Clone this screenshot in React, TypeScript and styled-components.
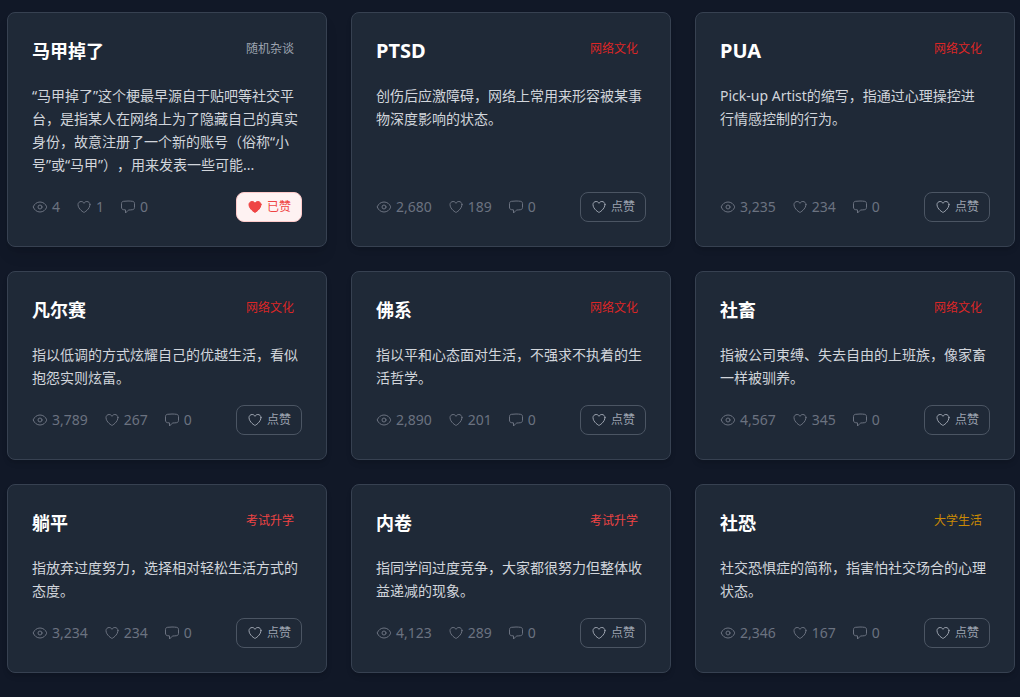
import React, { useState } from "react";
import styled, { createGlobalStyle } from "styled-components";

const GlobalStyle = createGlobalStyle`
  *, *::before, *::after { box-sizing: border-box; }
  body {
    margin: 0;
    background: #111827;
    color: #ffffff;
    font-family: "Noto Sans", "Noto Sans CJK SC", sans-serif;
    text-spacing-trim: space-all;
  }
`;

const Page = styled.main`
  padding: 12px 5px 23px 7px;
`;

const Grid = styled.div`
  display: grid;
  grid-template-columns: repeat(3, minmax(0, 1fr));
  gap: 24px;
`;

const Card = styled.article<{ $raised?: boolean }>`
  display: flex;
  flex-direction: column;
  padding: 24px;
  border: 1px solid #374151;
  border-radius: 8px;
  background: #1f2937;
  box-shadow: ${(p) =>
    p.$raised
      ? "0 10px 15px -3px rgba(0, 0, 0, 0.1), 0 4px 6px -4px rgba(0, 0, 0, 0.1)"
      : "0 4px 6px -1px rgba(0, 0, 0, 0.1), 0 2px 4px -2px rgba(0, 0, 0, 0.1)"};
`;

const CardHeader = styled.header`
  display: flex;
  align-items: flex-start;
  justify-content: space-between;
  margin-bottom: 19px;
`;

const Title = styled.h3<{ $latin: boolean }>`
  margin: 0;
  font-size: ${(p) => (p.$latin ? "20px" : "18px")};
  line-height: 28px;
  font-weight: 700;
`;

const Tag = styled.span<{ $color: string }>`
  flex: none;
  padding: 4px 8px;
  font-size: 12px;
  line-height: 16px;
  color: ${(p) => p.$color};
`;

const Description = styled.p`
  flex: 1;
  margin: 0 0 16px;
  padding-right: 3px;
  font-size: 14px;
  line-height: 23px;
  color: #d1d5db;
`;

const CardFooter = styled.footer`
  display: flex;
  align-items: center;
  justify-content: space-between;
`;

const Stats = styled.div`
  display: flex;
  gap: 16px;
  color: #6b7280;
  font-size: 14px;
  line-height: 20px;
`;

const Stat = styled.span`
  display: flex;
  align-items: center;
  gap: 4px;
`;

const LikeButton = styled.button<{ $liked: boolean }>`
  display: flex;
  align-items: center;
  gap: 4px;
  height: 30px;
  padding: 0 10px;
  border: 1px solid ${(p) => (p.$liked ? "#fecaca" : "#4b5563")};
  border-radius: 8px;
  background: ${(p) => (p.$liked ? "#fef2f2" : "transparent")};
  color: ${(p) => (p.$liked ? "#ef4444" : "#9ca3af")};
  font-family: inherit;
  font-size: 12px;
  line-height: 16px;
  cursor: pointer;
`;

const Icon = styled.svg`
  display: block;
  width: 16px;
  height: 16px;
  flex: none;
  stroke: currentColor;
  stroke-width: 1.5;
  stroke-linecap: round;
  stroke-linejoin: round;
`;

const EyeIcon = () => (
  <Icon viewBox="0 0 24 24" fill="none" aria-hidden="true">
    <path d="M2.036 12.322a1.012 1.012 0 0 1 0-.639C3.423 7.51 7.36 4.5 12 4.5c4.638 0 8.573 3.007 9.963 7.178.07.207.07.431 0 .639C20.577 16.49 16.64 19.5 12 19.5c-4.638 0-8.573-3.007-9.963-7.178Z" />
    <path d="M15 12a3 3 0 1 1-6 0 3 3 0 0 1 6 0Z" />
  </Icon>
);

const HeartIcon = ({ filled = false }: { filled?: boolean }) => (
  <Icon viewBox="0 0 24 24" fill={filled ? "currentColor" : "none"} aria-hidden="true">
    <path d="M21 8.25c0-2.485-2.099-4.5-4.688-4.5-1.935 0-3.597 1.126-4.312 2.733-.715-1.607-2.377-2.733-4.313-2.733C5.1 3.75 3 5.765 3 8.25c0 7.22 9 12 9 12s9-4.78 9-12Z" />
  </Icon>
);

const CommentIcon = () => (
  <Icon viewBox="0 0 24 24" fill="none" aria-hidden="true">
    <path d="M2.25 12.76c0 1.6 1.123 2.994 2.707 3.227 1.087.16 2.185.283 3.293.369V21l4.076-4.076a1.526 1.526 0 0 1 1.037-.443 48.282 48.282 0 0 0 5.68-.494c1.584-.233 2.707-1.626 2.707-3.228V6.741c0-1.602-1.123-2.995-2.707-3.228A48.394 48.394 0 0 0 12 3c-2.392 0-4.744.175-7.043.513C3.373 3.746 2.25 5.14 2.25 6.741v6.018Z" />
  </Icon>
);

interface Meme {
  title: string;
  category: string;
  text: string;
  views: number;
  likes: number;
  comments: number;
  liked?: boolean;
}

const categoryColors: Record<string, string> = {
  随机杂谈: "#9ca3af",
  网络文化: "#dc2626",
  考试升学: "#ef4444",
  大学生活: "#ca8a04",
};

const memes: Meme[] = [
  { title: "马甲掉了", category: "随机杂谈", text: "“马甲掉了”这个梗最早源自于贴吧等社交平台，是指某人在网络上为了隐藏自己的真实身份，故意注册了一个新的账号（俗称“小号”或“马甲”），用来发表一些可能...", views: 4, likes: 1, comments: 0, liked: true },
  { title: "PTSD", category: "网络文化", text: "创伤后应激障碍，网络上常用来形容被某事物深度影响的状态。", views: 2680, likes: 189, comments: 0 },
  { title: "PUA", category: "网络文化", text: "Pick-up Artist的缩写，指通过心理操控进行情感控制的行为。", views: 3235, likes: 234, comments: 0 },
  { title: "凡尔赛", category: "网络文化", text: "指以低调的方式炫耀自己的优越生活，看似抱怨实则炫富。", views: 3789, likes: 267, comments: 0 },
  { title: "佛系", category: "网络文化", text: "指以平和心态面对生活，不强求不执着的生活哲学。", views: 2890, likes: 201, comments: 0 },
  { title: "社畜", category: "网络文化", text: "指被公司束缚、失去自由的上班族，像家畜一样被驯养。", views: 4567, likes: 345, comments: 0 },
  { title: "躺平", category: "考试升学", text: "指放弃过度努力，选择相对轻松生活方式的态度。", views: 3234, likes: 234, comments: 0 },
  { title: "内卷", category: "考试升学", text: "指同学间过度竞争，大家都很努力但整体收益递减的现象。", views: 4123, likes: 289, comments: 0 },
  { title: "社恐", category: "大学生活", text: "社交恐惧症的简称，指害怕社交场合的心理状态。", views: 2346, likes: 167, comments: 0 },
];

function MemeCard({ meme }: { meme: Meme }) {
  const [liked, setLiked] = useState(Boolean(meme.liked));
  const likes = meme.likes + Number(liked) - Number(Boolean(meme.liked));
  return (
    <Card $raised={meme.liked}>
      <CardHeader>
        <Title $latin={/^[A-Za-z]+$/.test(meme.title)}>{meme.title}</Title>
        <Tag $color={categoryColors[meme.category]}>{meme.category}</Tag>
      </CardHeader>
      <Description>{meme.text}</Description>
      <CardFooter>
        <Stats>
          <Stat><EyeIcon />{meme.views.toLocaleString("en-US")}</Stat>
          <Stat><HeartIcon />{likes}</Stat>
          <Stat><CommentIcon />{meme.comments}</Stat>
        </Stats>
        <LikeButton type="button" $liked={liked} aria-pressed={liked} onClick={() => setLiked(!liked)}>
          <HeartIcon filled={liked} />
          {liked ? "已赞" : "点赞"}
        </LikeButton>
      </CardFooter>
    </Card>
  );
}

export default function App() {
  return (
    <>
      <GlobalStyle />
      <Page>
        <Grid>
          {memes.map((meme) => (
            <MemeCard key={meme.title} meme={meme} />
          ))}
        </Grid>
      </Page>
    </>
  );
}
